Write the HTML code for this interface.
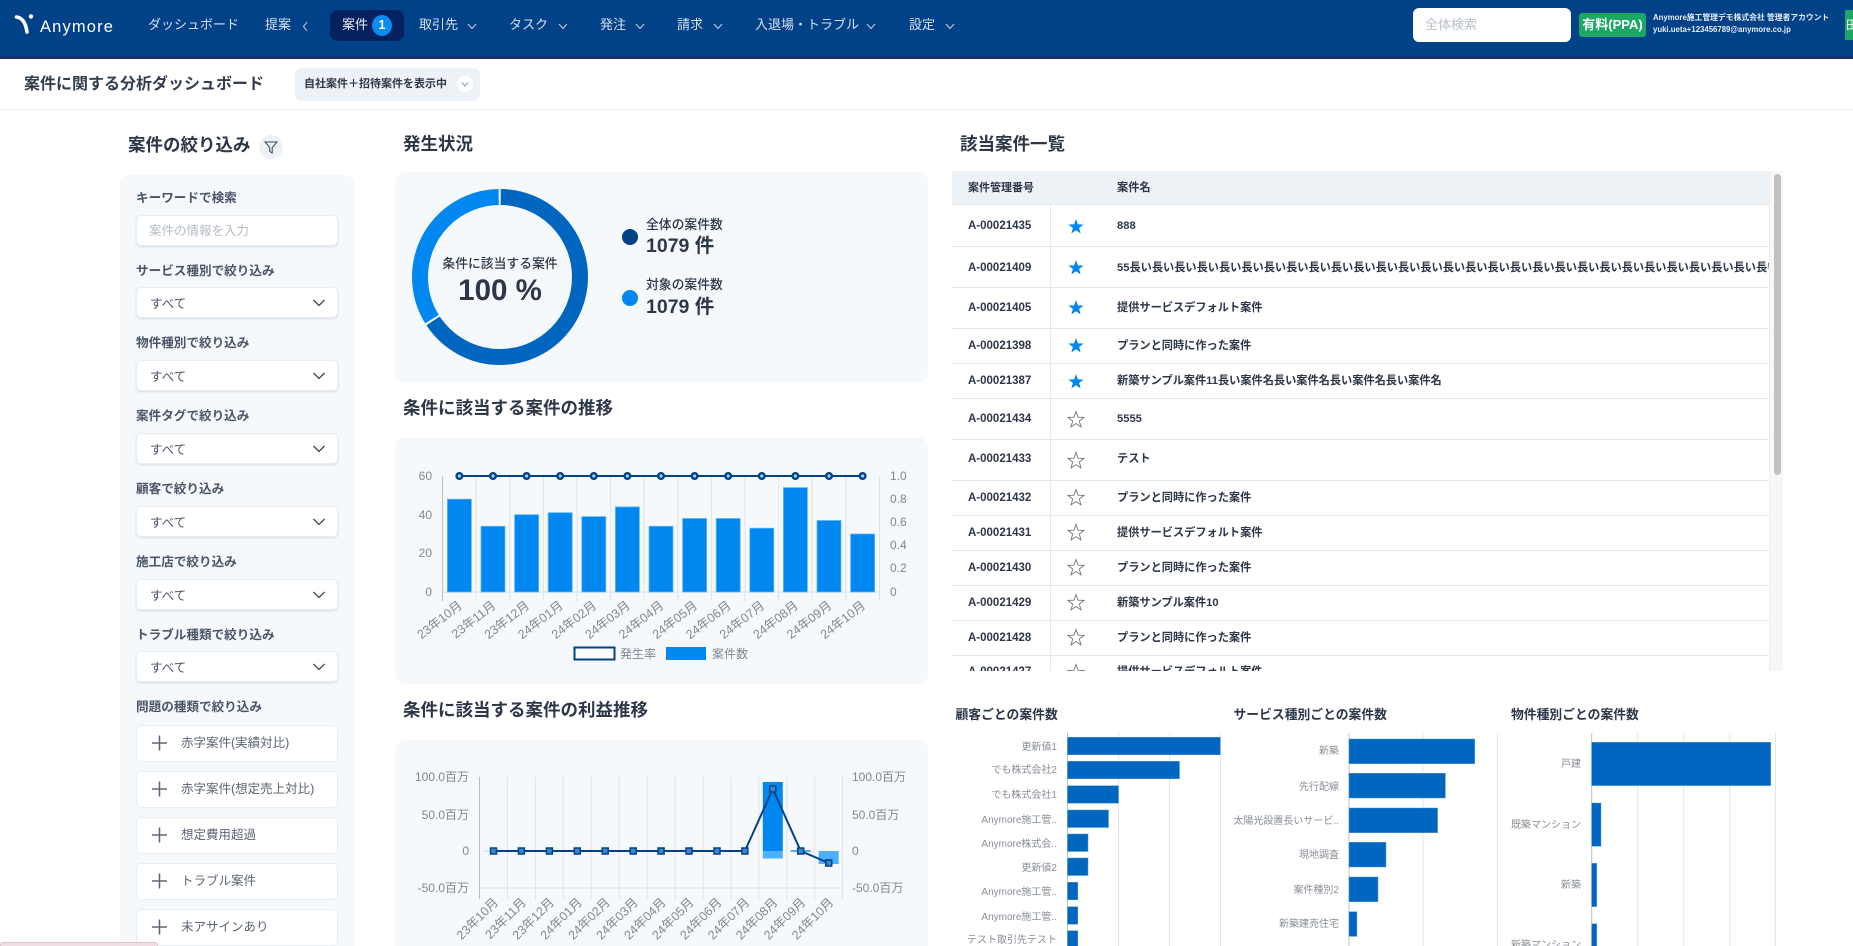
<!DOCTYPE html>
<html lang="ja"><head><meta charset="utf-8"><title>案件に関する分析ダッシュボード</title>
<style>
*{box-sizing:border-box}
html,body{margin:0;padding:0;width:1853px;height:946px;overflow:hidden;background:#fff}
body{position:relative;font-family:"Liberation Sans","Noto Sans CJK JP",sans-serif;color:#2d3748}
.a{position:absolute}
.t{position:absolute;white-space:nowrap;line-height:20px;height:20px}
.nav{color:#d5e0ee;font-size:13px}
.h{font-size:17.5px;font-weight:700;color:#2d3748;line-height:24px;height:24px}
.p{position:absolute;background:#f5f9fc;border-radius:10px}
.l{font-size:12.6px;font-weight:700;color:#4a5568;left:136px}
.box{position:absolute;left:136px;width:202px;background:#fff;border:1px solid #e8edf2;border-radius:5px;box-shadow:0 1px 2px rgba(40,60,90,.14)}
.v{font-size:12.5px;color:#4a5568;left:150px}
.b{font-size:12.5px;color:#5a6472;left:181px}
.r{position:absolute;left:0;width:817px;border-bottom:1px solid #e2e8ee}
.id{font-size:11.5px;font-weight:700;left:16px;color:#2d3748}
.nm{font-size:11.2px;font-weight:700;left:165px;color:#2d3748}
.hd3{font-size:12.8px;font-weight:700;color:#2d3748}
svg text{font-family:"Liberation Sans","Noto Sans CJK JP",sans-serif}
</style></head><body>

<div class="a" style="left:0;top:0;width:1853px;height:59px;background:linear-gradient(#004187 0,#004187 55px,#1c2f6c 57px,#1c2f6c 59px)"></div>
<svg class="a" style="left:0;top:0" width="120" height="59"><path d="M16.500 17 Q25 18 27 32" fill="none" stroke="#fff" stroke-width="3.600" stroke-linecap="round"/><circle cx="31" cy="16.500" r="2.200" fill="#fff"/></svg>
<div class="t" style="left:40px;top:17px;font-size:16.500px;letter-spacing:1.150px;color:#fff">Anymore</div>
<div class="t nav" style="left:148px;top:15px">ダッシュボード</div>
<div class="t nav" style="left:265px;top:15px">提案</div>
<div class="a" style="left:330px;top:10px;width:74px;height:31px;border-radius:8px;background:#05215f"></div>
<div class="t nav" style="left:342px;top:15px;color:#e6edf7">案件</div>
<div class="a" style="left:372px;top:15px;width:20px;height:21px;border-radius:50%;background:#0a8cf0;color:#fff;font-size:12.500px;line-height:21px;text-align:center;font-weight:700">1</div>
<div class="t nav" style="left:419px;top:15px">取引先</div>
<div class="t nav" style="left:509px;top:15px">タスク</div>
<div class="t nav" style="left:600px;top:15px">発注</div>
<div class="t nav" style="left:677px;top:15px">請求</div>
<div class="t nav" style="left:755px;top:15px">入退場・トラブル</div>
<div class="t nav" style="left:909px;top:15px">設定</div>
<svg class="a" style="left:0;top:0" width="1000" height="59" fill="none" stroke="#c5d3e5" stroke-width="1"><path d="M307 22l-3.500 4.500 3.500 4.500"/><path d="M468 24l4 4.500 4-4.500M559 24l4 4.500 4-4.500M636 24l4 4.500 4-4.500M714 24l4 4.500 4-4.500M867 24l4 4.500 4-4.500M946 24l4 4.500 4-4.500"/></svg>
<div class="a" style="left:1413px;top:8px;width:158px;height:34px;background:#fff;border-radius:6px"></div>
<div class="t" style="left:1425px;top:15px;font-size:13px;color:#b8bfc8">全体検索</div>
<div class="a" style="left:1579px;top:13px;width:67px;height:24px;background:#1ca766;border-radius:3px;color:#fff;font-size:13px;font-weight:700;line-height:24px;text-align:center">有料(PPA)</div>
<div class="t" style="left:1653px;top:8px;font-size:7.800px;font-weight:700;color:#e8eef6">Anymore施工管理デモ株式会社 管理者アカウント</div>
<div class="t" style="left:1653px;top:20px;font-size:7.800px;font-weight:700;color:#e8eef6">yuki.ueta+123456789@anymore.co.jp</div>
<div class="a" style="left:1845px;top:10px;width:8px;height:30px;background:#1ca766;overflow:hidden;color:#fff;font-size:12px;line-height:30px;padding-left:1px">田</div>

<div class="t" style="left:24px;top:75px;font-size:16px;font-weight:700;color:#333f4e">案件に関する分析ダッシュボード</div>
<div class="a" style="left:295px;top:68px;width:185px;height:33px;background:#edf2f6;border-radius:7px"></div>
<div class="t" style="left:304px;top:74px;font-size:11px;font-weight:700;color:#2d3748">自社案件＋招待案件を表示中</div>
<svg class="a" style="left:456px;top:75px" width="18" height="18"><circle cx="9" cy="9" r="8" fill="#fff"/><path d="M6 7.500l3 3.500 3-3.500" fill="none" stroke="#8a94a3"/></svg>
<div class="a" style="left:0;top:109px;width:1853px;height:1px;background:#e8ecef"></div>

<div class="t h" style="left:128px;top:133px;font-size:17.500px">案件の絞り込み</div>
<svg class="a" style="left:259px;top:135px" width="24" height="24"><circle cx="12" cy="12" r="12" fill="#edf2f6"/><path d="M6 7h12l-4.800 5.500v5.500l-2.400-1.500v-4z" fill="none" stroke="#3a4656" stroke-width="1"/></svg>
<div class="p" style="left:120px;top:175px;width:234px;height:790px"></div>
<div class="t l" style="top:188px">キーワードで検索</div>
<div class="box" style="top:215px;height:31px"></div>
<div class="t" style="left:149px;top:221px;font-size:12.500px;color:#b5bcc6">案件の情報を入力</div>

<div class="t l" style="top:261px">サービス種別で絞り込み</div><div class="box" style="top:287px;height:31px"></div><div class="t v" style="top:294px">すべて</div>
<div class="t l" style="top:333px">物件種別で絞り込み</div><div class="box" style="top:360px;height:31px"></div><div class="t v" style="top:367px">すべて</div>
<div class="t l" style="top:406px">案件タグで絞り込み</div><div class="box" style="top:433px;height:31px"></div><div class="t v" style="top:440px">すべて</div>
<div class="t l" style="top:479px">顧客で絞り込み</div><div class="box" style="top:506px;height:31px"></div><div class="t v" style="top:513px">すべて</div>
<div class="t l" style="top:552px">施工店で絞り込み</div><div class="box" style="top:579px;height:31px"></div><div class="t v" style="top:586px">すべて</div>
<div class="t l" style="top:625px">トラブル種類で絞り込み</div><div class="box" style="top:651px;height:31px"></div><div class="t v" style="top:658px">すべて</div>
<div class="t l" style="top:697px">問題の種類で絞り込み</div>
<div class="box" style="top:725px;height:37px;box-shadow:none"></div><div class="t b" style="top:733px">赤字案件(実績対比)</div>
<div class="box" style="top:771px;height:37px;box-shadow:none"></div><div class="t b" style="top:779px">赤字案件(想定売上対比)</div>
<div class="box" style="top:817px;height:37px;box-shadow:none"></div><div class="t b" style="top:825px">想定費用超過</div>
<div class="box" style="top:863px;height:37px;box-shadow:none"></div><div class="t b" style="top:871px">トラブル案件</div>
<div class="box" style="top:909px;height:37px;box-shadow:none"></div><div class="t b" style="top:917px">未アサインあり</div>
<svg class="a" style="left:0;top:0" width="360" height="946" fill="none" stroke="#3a4656"><g stroke-width="1.300"><path d="M313.500 300l5.500 5.500 5.500-5.500M313.500 373l5.500 5.500 5.500-5.500M313.500 446l5.500 5.500 5.500-5.500M313.500 519l5.500 5.500 5.500-5.500M313.500 592l5.500 5.500 5.500-5.500M313.500 664l5.500 5.500 5.500-5.500"/></g><g stroke="#5b6675" stroke-width="1.500"><path d="M152 743h15M159.500 735.500v15M152 789h15M159.500 781.500v15M152 835h15M159.500 827.500v15M152 881h15M159.500 873.500v15M152 927h15M159.500 919.500v15"/></g></svg>
<div class="a" style="left:0;top:942px;width:158px;height:6px;background:#f2dde2;border:1px solid #d9c8cd;border-radius:3px 3px 0 0"></div>

<div class="t h" style="left:403px;top:132px">発生状況</div>
<div class="p" style="left:395px;top:172px;width:533px;height:210px"></div>
<div class="t h" style="left:403px;top:396px">条件に該当する案件の推移</div>
<div class="p" style="left:395px;top:437px;width:533px;height:247px"></div>
<div class="t h" style="left:403px;top:698px">条件に該当する案件の利益推移</div>
<div class="p" style="left:395px;top:740px;width:533px;height:230px"></div>
<div class="t h" style="left:960px;top:132px">該当案件一覧</div>

<svg class="a" style="left:0;top:0" width="1853" height="946">
<g fill="none" stroke-width="16" transform="rotate(-90 500 277)">
<circle cx="500" cy="277" r="80" stroke="#0066bf" pathLength="360" stroke-dasharray="236.500 360" stroke-dashoffset="-0.500"/>
<circle cx="500" cy="277" r="80" stroke="#0088f0" pathLength="360" stroke-dasharray="121 360" stroke-dashoffset="-238.500"/>
</g>
<text x="500" y="268" text-anchor="middle" font-size="12.800" font-weight="500" fill="#2d3748">条件に該当する案件</text>
<text x="500" y="300" text-anchor="middle" font-size="29.500" font-weight="700" fill="#2d3748">100 %</text>
<circle cx="630" cy="237" r="8" fill="#004187"/><circle cx="630" cy="298" r="8" fill="#0088f0"/>
<text x="646" y="229" font-size="12.800" font-weight="500" fill="#2d3748">全体の案件数</text>
<text x="646" y="252" font-size="19.500" font-weight="700" fill="#2d3748">1079 件</text>
<text x="646" y="289" font-size="12.800" font-weight="500" fill="#2d3748">対象の案件数</text>
<text x="646" y="313" font-size="19.500" font-weight="700" fill="#2d3748">1079 件</text>

<g stroke="#dfe3e8" stroke-width="1"><path d="M476.200 476V601M509.800 476V601M543.400 476V601M577 476V601M610.600 476V601M644.200 476V601M677.800 476V601M711.400 476V601M745 476V601M778.600 476V601M812.200 476V601M845.800 476V601M879.500 476V601M442.600 592H880"/></g>
<path d="M442.600 476V601" stroke="#b8bdc4"/>
<g fill="#0088f0" stroke="#60b5f7" stroke-width=".8">
<rect x="447.400" y="499.200" width="24" height="92.800"/><rect x="481" y="526.300" width="24" height="65.700"/><rect x="514.600" y="514.700" width="24" height="77.300"/><rect x="548.200" y="512.700" width="24" height="79.300"/><rect x="581.800" y="516.600" width="24" height="75.400"/><rect x="615.400" y="506.900" width="24" height="85.100"/><rect x="649" y="526.300" width="24" height="65.700"/><rect x="682.600" y="518.500" width="24" height="73.500"/><rect x="716.200" y="518.500" width="24" height="73.500"/><rect x="749.800" y="528.200" width="24" height="63.800"/><rect x="783.400" y="487.600" width="24" height="104.400"/><rect x="817" y="520.500" width="24" height="71.500"/><rect x="850.600" y="534" width="24" height="58"/>
</g>
<path d="M459.400 476H862.600" stroke="#004187" stroke-width="2"/>
<g fill="#a9cdec" stroke="#004187" stroke-width="2.400">
<circle cx="459.400" cy="476" r="2.800"/><circle cx="493" cy="476" r="2.800"/><circle cx="526.600" cy="476" r="2.800"/><circle cx="560.200" cy="476" r="2.800"/><circle cx="593.800" cy="476" r="2.800"/><circle cx="627.400" cy="476" r="2.800"/><circle cx="661" cy="476" r="2.800"/><circle cx="694.600" cy="476" r="2.800"/><circle cx="728.200" cy="476" r="2.800"/><circle cx="761.800" cy="476" r="2.800"/><circle cx="795.400" cy="476" r="2.800"/><circle cx="829" cy="476" r="2.800"/><circle cx="862.600" cy="476" r="2.800"/>
</g>
<g font-size="12" fill="#7f8790" text-anchor="end"><text x="432" y="480">60</text><text x="432" y="519">40</text><text x="432" y="557">20</text><text x="432" y="596">0</text></g>
<g font-size="12" fill="#7f8790"><text x="890" y="480">1.0</text><text x="890" y="503">0.8</text><text x="890" y="526">0.6</text><text x="890" y="549">0.4</text><text x="890" y="572">0.2</text><text x="890" y="596">0</text></g>
<g font-size="12.500" fill="#7f8790" text-anchor="end">
<text transform="translate(463 607) rotate(-38)">23年10月</text><text transform="translate(496.600 607) rotate(-38)">23年11月</text><text transform="translate(530.200 607) rotate(-38)">23年12月</text><text transform="translate(563.800 607) rotate(-38)">24年01月</text><text transform="translate(597.400 607) rotate(-38)">24年02月</text><text transform="translate(631 607) rotate(-38)">24年03月</text><text transform="translate(664.600 607) rotate(-38)">24年04月</text><text transform="translate(698.200 607) rotate(-38)">24年05月</text><text transform="translate(731.800 607) rotate(-38)">24年06月</text><text transform="translate(765.400 607) rotate(-38)">24年07月</text><text transform="translate(799 607) rotate(-38)">24年08月</text><text transform="translate(832.600 607) rotate(-38)">24年09月</text><text transform="translate(866.200 607) rotate(-38)">24年10月</text>
</g>
<rect x="574.500" y="647.500" width="40" height="12" fill="#fff" stroke="#004187" stroke-width="2"/>
<text x="620" y="658" font-size="12" fill="#7f8790">発生率</text>
<rect x="666" y="647" width="40" height="13" fill="#0088f0"/>
<text x="712" y="658" font-size="12" fill="#7f8790">案件数</text>

<g stroke="#dfe3e8" stroke-width="1"><path d="M507.400 777V899M535.400 777V899M563.300 777V899M591.200 777V899M619.200 777V899M647.100 777V899M675 777V899M703 777V899M730.900 777V899M758.800 777V899M786.800 777V899M814.700 777V899M842.600 777V899M479.500 888H843"/></g>
<path d="M479.500 777V899" stroke="#b8bdc4"/>
<rect x="762.800" y="782" width="20" height="69" fill="#0088f0"/>
<rect x="762.800" y="851" width="20" height="7.500" fill="#4db0ff"/>
<rect x="790.700" y="850" width="20" height="2" fill="#4db0ff"/>
<rect x="818.700" y="851" width="20" height="13" fill="#4db0ff"/>
<path d="M483.500 851H735" stroke="#b9dcf8" stroke-width="1"/>
<path d="M493.500 851H744.900L772.800 789 800.700 851 828.700 863" fill="none" stroke="#004187" stroke-width="2"/>
<g fill="#3f86c8" stroke="#004187" stroke-width="1.500">
<rect x="490.500" y="848" width="6" height="6"/><rect x="518.400" y="848" width="6" height="6"/><rect x="546.400" y="848" width="6" height="6"/><rect x="574.300" y="848" width="6" height="6"/><rect x="602.200" y="848" width="6" height="6"/><rect x="630.200" y="848" width="6" height="6"/><rect x="658.100" y="848" width="6" height="6"/><rect x="686" y="848" width="6" height="6"/><rect x="714" y="848" width="6" height="6"/><rect x="741.900" y="848" width="6" height="6"/><rect x="769.800" y="786" width="6" height="6"/><rect x="797.700" y="848" width="6" height="6"/><rect x="825.700" y="860" width="6" height="6"/>
</g>
<g font-size="12" fill="#7f8790" text-anchor="end"><text x="469" y="781">100.0百万</text><text x="469" y="819">50.0百万</text><text x="469" y="855">0</text><text x="469" y="892">-50.0百万</text></g>
<g font-size="12" fill="#7f8790"><text x="852" y="781">100.0百万</text><text x="852" y="819">50.0百万</text><text x="852" y="855">0</text><text x="852" y="892">-50.0百万</text></g>
<g font-size="12.500" fill="#7f8790" text-anchor="end">
<text transform="translate(499 903) rotate(-45)">23年10月</text><text transform="translate(526.900 903) rotate(-45)">23年11月</text><text transform="translate(554.900 903) rotate(-45)">23年12月</text><text transform="translate(582.800 903) rotate(-45)">24年01月</text><text transform="translate(610.700 903) rotate(-45)">24年02月</text><text transform="translate(638.700 903) rotate(-45)">24年03月</text><text transform="translate(666.600 903) rotate(-45)">24年04月</text><text transform="translate(694.500 903) rotate(-45)">24年05月</text><text transform="translate(722.500 903) rotate(-45)">24年06月</text><text transform="translate(750.400 903) rotate(-45)">24年07月</text><text transform="translate(778.300 903) rotate(-45)">24年08月</text><text transform="translate(806.200 903) rotate(-45)">24年09月</text><text transform="translate(834.200 903) rotate(-45)">24年10月</text>
</g>

<g stroke="#e2e4e7" stroke-width="1"><path d="M1118.600 733V946M1169.500 733V946M1220.500 733V946M1423 733V946M1497.500 733V946M1637.700 733V946M1683.700 733V946M1729.700 733V946M1775.500 733V946"/></g>
<path d="M1067.500 733V946M1349 733V946M1591.700 733V946" stroke="#bcc0c5"/>
<g fill="#0066bf" stroke="#4f9ad8" stroke-width=".5">
<rect x="1067.500" y="737.300" width="152.800" height="17.500"/><rect x="1067.500" y="761.300" width="112" height="17.500"/><rect x="1067.500" y="785.700" width="51" height="17.500"/><rect x="1067.500" y="810" width="41" height="17.500"/><rect x="1067.500" y="834" width="20.500" height="17.500"/><rect x="1067.500" y="858" width="20.500" height="17.500"/><rect x="1067.500" y="882.300" width="10.300" height="17.500"/><rect x="1067.500" y="906.700" width="10.300" height="17.500"/><rect x="1067.500" y="930.700" width="10.300" height="17.500"/>
<rect x="1349" y="739" width="125.700" height="24.700"/><rect x="1349" y="773.300" width="96.400" height="24.700"/><rect x="1349" y="808" width="88.600" height="24.700"/><rect x="1349" y="842.300" width="37" height="24.700"/><rect x="1349" y="877" width="29" height="24.700"/><rect x="1349" y="911.700" width="7.900" height="24.700"/>
<rect x="1591.700" y="742.300" width="179" height="43.300"/><rect x="1591.700" y="803" width="9.300" height="43.300"/><rect x="1591.700" y="863.300" width="5" height="43.300"/><rect x="1591.700" y="923.700" width="5" height="43.300"/>
</g>
<g font-size="10" fill="#888e96" text-anchor="end">
<text x="1057" y="750">更新値1</text><text x="1057" y="773">でも株式会社2</text><text x="1057" y="798">でも株式会社1</text><text x="1057" y="823">Anymore施工管..</text><text x="1057" y="847">Anymore株式会..</text><text x="1057" y="871">更新値2</text><text x="1057" y="895">Anymore施工管..</text><text x="1057" y="920">Anymore施工管..</text><text x="1057" y="943">テスト取引先テスト</text>
<text x="1339" y="754">新築</text><text x="1339" y="790">先行配線</text><text x="1339" y="824">太陽光設置長いサービ..</text><text x="1339" y="858">現地調査</text><text x="1339" y="893">案件種別2</text><text x="1339" y="927">新築建売住宅</text>
<text x="1581" y="767">戸建</text><text x="1581" y="828">既築マンション</text><text x="1581" y="888">新築</text><text x="1581" y="948">新築マンション</text>
</g>
</svg>
<div class="t hd3" style="left:955.500px;top:705px">顧客ごとの案件数</div>
<div class="t hd3" style="left:1233.500px;top:705px">サービス種別ごとの案件数</div>
<div class="t hd3" style="left:1511px;top:705px">物件種別ごとの案件数</div>

<div class="a" style="left:1769px;top:171px;width:14px;height:500px;background:#f7f7f7;border-left:1px solid #eee"></div>
<div class="a" style="left:1773.500px;top:174px;width:7.500px;height:301px;background:#c1c1c1;border-radius:4px"></div>
<div class="a" style="left:952px;top:171px;width:817px;height:500px;overflow:hidden;background:#fff">
<div class="a" style="left:0;top:0;width:817px;height:34px;background:#edf2f6;border-bottom:1px solid #e2e8ee"></div>
<div class="t id" style="top:7px;font-size:11px">案件管理番号</div><div class="t nm" style="top:7px">案件名</div>
<div class="a" style="left:98px;top:34px;width:1px;height:466px;background:#e2e8ee"></div>
<div class="r" style="top:34px;height:42px"></div><div class="r" style="top:76px;height:41px"></div><div class="r" style="top:117px;height:41px"></div><div class="r" style="top:158px;height:35px"></div><div class="r" style="top:193px;height:35px"></div><div class="r" style="top:228px;height:41px"></div><div class="r" style="top:269px;height:41px"></div><div class="r" style="top:310px;height:35px"></div><div class="r" style="top:345px;height:35px"></div><div class="r" style="top:380px;height:35px"></div><div class="r" style="top:415px;height:35px"></div><div class="r" style="top:450px;height:35px"></div>
<div class="t id" style="top:45px">A-00021435</div><div class="t nm" style="top:45px">888</div>
<div class="t id" style="top:87px">A-00021409</div><div class="t nm" style="top:87px;width:652px;overflow:hidden">55長い長い長い長い長い長い長い長い長い長い長い長い長い長い長い長い長い長い長い長い長い長い長い長い長い長い長い長い長い長い</div>
<div class="t id" style="top:127px">A-00021405</div><div class="t nm" style="top:127px">提供サービスデフォルト案件</div>
<div class="t id" style="top:165px">A-00021398</div><div class="t nm" style="top:165px">プランと同時に作った案件</div>
<div class="t id" style="top:200px">A-00021387</div><div class="t nm" style="top:200px">新築サンプル案件11長い案件名長い案件名長い案件名長い案件名</div>
<div class="t id" style="top:238px">A-00021434</div><div class="t nm" style="top:238px">5555</div>
<div class="t id" style="top:278px">A-00021433</div><div class="t nm" style="top:278px">テスト</div>
<div class="t id" style="top:317px">A-00021432</div><div class="t nm" style="top:317px">プランと同時に作った案件</div>
<div class="t id" style="top:352px">A-00021431</div><div class="t nm" style="top:352px">提供サービスデフォルト案件</div>
<div class="t id" style="top:387px">A-00021430</div><div class="t nm" style="top:387px">プランと同時に作った案件</div>
<div class="t id" style="top:422px">A-00021429</div><div class="t nm" style="top:422px">新築サンプル案件10</div>
<div class="t id" style="top:457px">A-00021428</div><div class="t nm" style="top:457px">プランと同時に作った案件</div>
<div class="t id" style="top:491px">A-00021427</div><div class="t nm" style="top:491px">提供サービスデフォルト案件</div>
<svg class="a" style="left:0;top:0" width="817" height="500">
<g fill="#0088f0">
<polygon transform="translate(124 56)" points="0,-8 1.900,-2.600 7.600,-2.500 3.100,1 4.700,6.500 0,3.300 -4.700,6.500 -3.100,1 -7.600,-2.500 -1.900,-2.600"/>
<polygon transform="translate(124 97)" points="0,-8 1.900,-2.600 7.600,-2.500 3.100,1 4.700,6.500 0,3.300 -4.700,6.500 -3.100,1 -7.600,-2.500 -1.900,-2.600"/>
<polygon transform="translate(124 137)" points="0,-8 1.900,-2.600 7.600,-2.500 3.100,1 4.700,6.500 0,3.300 -4.700,6.500 -3.100,1 -7.600,-2.500 -1.900,-2.600"/>
<polygon transform="translate(124 175)" points="0,-8 1.900,-2.600 7.600,-2.500 3.100,1 4.700,6.500 0,3.300 -4.700,6.500 -3.100,1 -7.600,-2.500 -1.900,-2.600"/>
<polygon transform="translate(124 211)" points="0,-8 1.900,-2.600 7.600,-2.500 3.100,1 4.700,6.500 0,3.300 -4.700,6.500 -3.100,1 -7.600,-2.500 -1.900,-2.600"/>
</g>
<g fill="#fff" stroke="#6f7680" stroke-width=".9">
<polygon transform="translate(124 249)" points="0,-8.500 2.060,-2.830 8.080,-2.630 3.330,1.080 5,6.880 0,3.500 -5,6.880 -3.330,1.080 -8.080,-2.630 -2.060,-2.830"/>
<polygon transform="translate(124 290)" points="0,-8.500 2.060,-2.830 8.080,-2.630 3.330,1.080 5,6.880 0,3.500 -5,6.880 -3.330,1.080 -8.080,-2.630 -2.060,-2.830"/>
<polygon transform="translate(124 327)" points="0,-8.500 2.060,-2.830 8.080,-2.630 3.330,1.080 5,6.880 0,3.500 -5,6.880 -3.330,1.080 -8.080,-2.630 -2.060,-2.830"/>
<polygon transform="translate(124 362)" points="0,-8.500 2.060,-2.830 8.080,-2.630 3.330,1.080 5,6.880 0,3.500 -5,6.880 -3.330,1.080 -8.080,-2.630 -2.060,-2.830"/>
<polygon transform="translate(124 397)" points="0,-8.500 2.060,-2.830 8.080,-2.630 3.330,1.080 5,6.880 0,3.500 -5,6.880 -3.330,1.080 -8.080,-2.630 -2.060,-2.830"/>
<polygon transform="translate(124 432)" points="0,-8.500 2.060,-2.830 8.080,-2.630 3.330,1.080 5,6.880 0,3.500 -5,6.880 -3.330,1.080 -8.080,-2.630 -2.060,-2.830"/>
<polygon transform="translate(124 467)" points="0,-8.500 2.060,-2.830 8.080,-2.630 3.330,1.080 5,6.880 0,3.500 -5,6.880 -3.330,1.080 -8.080,-2.630 -2.060,-2.830"/>
<polygon transform="translate(124 502)" points="0,-8.500 2.060,-2.830 8.080,-2.630 3.330,1.080 5,6.880 0,3.500 -5,6.880 -3.330,1.080 -8.080,-2.630 -2.060,-2.830"/>
</g>
</svg>
</div>
</body></html>
